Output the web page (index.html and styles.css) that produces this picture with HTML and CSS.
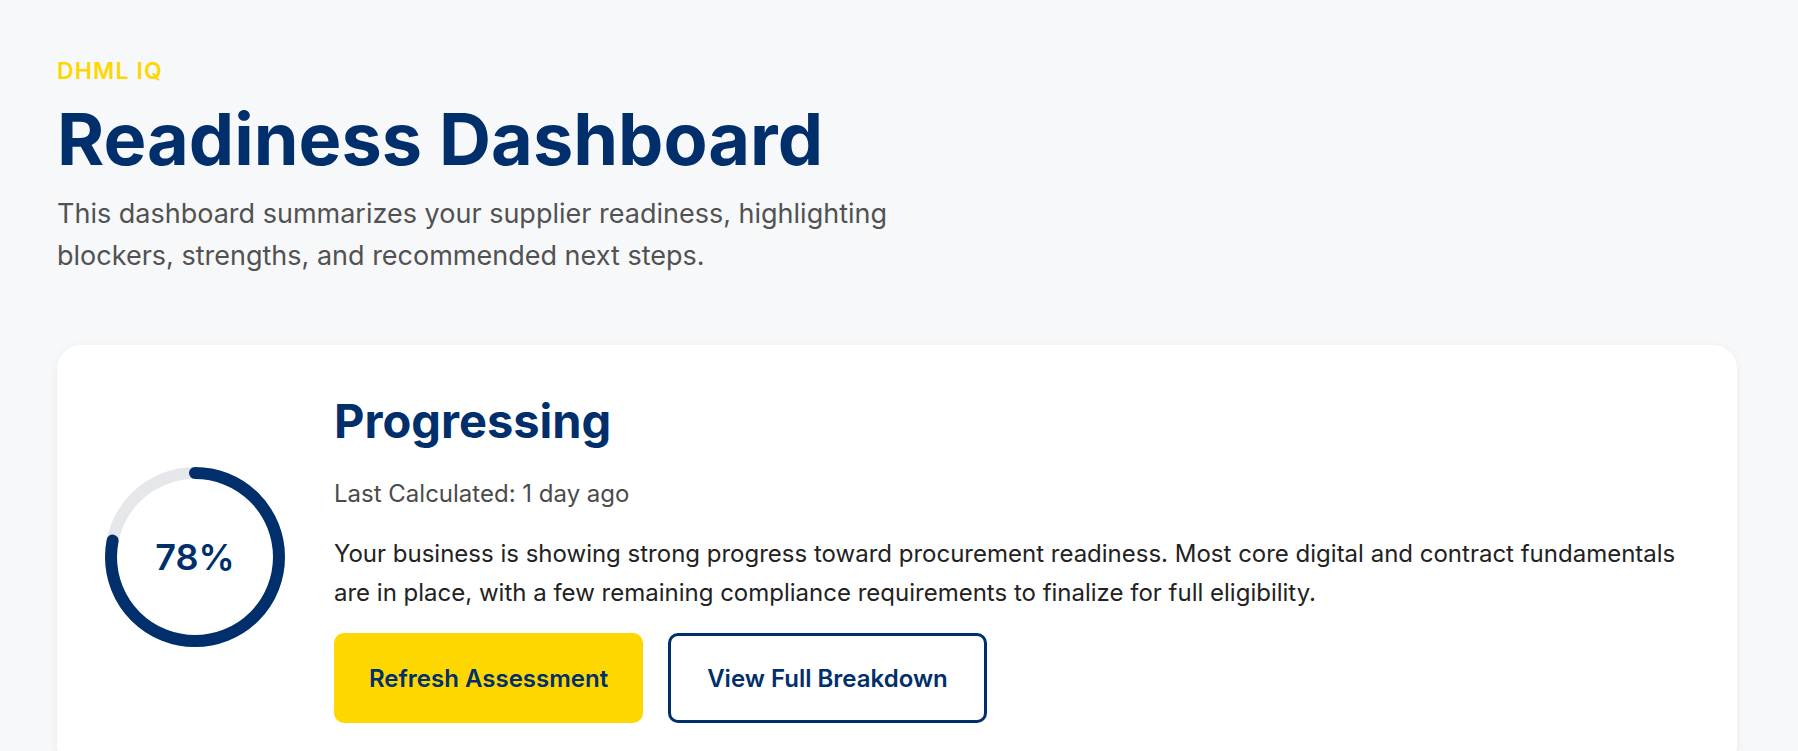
FILE: index.html
```html
<!DOCTYPE html>
<html lang="en">
<head>
<meta charset="utf-8">
<title>Readiness Dashboard</title>
<link rel="stylesheet" href="styles.css">
</head>
<body>
<main class="page">
  <header class="intro">
    <div class="eyebrow">DHML IQ</div>
    <h1 class="title">Readiness Dashboard</h1>
    <p class="lede">This dashboard summarizes your supplier readiness, highlighting blockers, strengths, and recommended next steps.</p>
  </header>
  <section class="card">
    <div class="gauge">
      <svg class="gauge-svg" viewBox="0 0 180 180" width="180" height="180">
        <circle class="gauge-track" cx="90" cy="90" r="84"></circle>
        <circle class="gauge-bar" cx="90" cy="90" r="84" style="stroke-dasharray: 411.7 527.8"></circle>
      </svg>
      <span class="gauge-value">78%</span>
    </div>
    <div class="summary">
      <h2 class="status">Progressing</h2>
      <p class="meta">Last Calculated: 1 day ago</p>
      <p class="desc">Your business is showing strong progress toward procurement readiness. Most core digital and contract fundamentals are in place, with a few remaining compliance requirements to finalize for full eligibility.</p>
      <div class="actions">
        <button class="btn btn-primary">Refresh Assessment</button>
        <button class="btn btn-outline">View Full Breakdown</button>
      </div>
    </div>
  </section>
</main>
</body>
</html>
```
FILE: styles.css
```css
* { box-sizing: border-box; }
html, body { margin: 0; padding: 0; }
body {
  background: #f7f8fa;
  font-family: Inter, "Noto Sans", "Liberation Sans", sans-serif;
  color: #222;
  height: 751px;
  overflow: hidden;
}
.page {
  padding: 58px 61px 0 57px;
}
.eyebrow {
  font-size: 23px;
  line-height: 26px;
  font-weight: 600;
  letter-spacing: 0.05em;
  color: #ffd700;
}
.title {
  margin: 15px 0 0;
  font-size: 72px;
  line-height: 79px;
  font-weight: 700;
  color: #002f6c;
}
.lede {
  margin: 15px 0 0;
  max-width: 880px;
  font-size: 27px;
  line-height: 42px;
  color: #525252;
}
.card {
  margin-top: 68px;
  background: #fff;
  border-radius: 24px;
  box-shadow: 0 2px 10px rgba(0, 0, 0, 0.06);
  padding: 46px 48px 46px 48px;
  display: flex;
  align-items: center;
  gap: 49px;
}
.gauge {
  position: relative;
  width: 180px;
  height: 180px;
  flex: none;
}
.gauge-svg {
  display: block;
  transform: rotate(-90deg);
}
.gauge-track {
  fill: none;
  stroke: #e5e7eb;
  stroke-width: 12;
}
.gauge-bar {
  fill: none;
  stroke: #002f6c;
  stroke-width: 12;
  stroke-linecap: round;
}
.gauge-value {
  position: absolute;
  inset: 0;
  display: flex;
  align-items: center;
  justify-content: center;
  font-size: 36px;
  font-weight: 600;
  color: #002f6c;
}
.summary {
  flex: 1;
  min-width: 0;
}
.status {
  margin: 0;
  font-size: 47px;
  line-height: 60px;
  font-weight: 700;
  color: #002f6c;
}
.meta {
  margin: 28px 0 0;
  font-size: 24px;
  line-height: 30px;
  color: #4b4b4b;
}
.desc {
  margin: 25px 0 0;
  font-size: 24px;
  line-height: 39px;
  color: #222;
}
.actions {
  margin-top: 21px;
  display: flex;
  gap: 25px;
}
.btn {
  height: 90px;
  padding: 0 35px;
  border-radius: 10px;
  font-family: inherit;
  font-size: 24px;
  font-weight: 600;
  color: #002f6c;
  cursor: pointer;
}
.btn-primary {
  background: #ffd700;
  border: none;
}
.btn-outline {
  background: #fff;
  border: 3px solid #002f6c;
  padding: 0 36px;
}
```
